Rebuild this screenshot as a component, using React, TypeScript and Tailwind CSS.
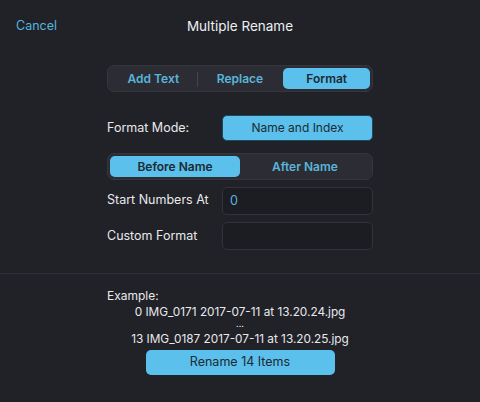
const font = { fontFamily: 'Inter, "Noto Sans", sans-serif' };

function Segment({ items, active }: { items: string[]; active: number }) {
  return (
    <div className="flex h-[27px] items-stretch rounded-[7px] border border-[#34353d] bg-[#2c2d34] p-[2px]">
      {items.map((label, i) => {
        const on = i === active;
        const showDivider = i > 0 && !on && i - 1 !== active;
        return (
          <div key={label} className="relative flex flex-1 items-center justify-center">
            {showDivider && <div className="absolute left-0 top-[4px] h-[15px] w-px bg-[#44454d]" />}
            <div
              className={
                on
                  ? 'flex h-full w-full items-center justify-center rounded-[5px] bg-[#5bc0eb] text-[12px] font-semibold text-[#1c2a33]'
                  : 'flex h-full w-full items-center justify-center text-[12px] font-semibold text-[#5ab5da]'
              }
            >
              {label}
            </div>
          </div>
        );
      })}
    </div>
  );
}

export default function App() {
  return (
    <div className="h-[402px] w-[480px] overflow-hidden bg-[#212228] text-[#e8e9ec]" style={font}>
      <div className="grid h-[50px] grid-cols-[1fr_auto_1fr] items-center px-4 pt-[3px]">
        <div className="text-[12.5px] text-[#54b4dc]">Cancel</div>
        <div className="text-[13.5px] text-[#eeeff1]">Multiple Rename</div>
        <div />
      </div>

      <div className="mx-auto w-[266px]">
        <div className="mt-[15px]">
          <Segment items={['Add Text', 'Replace', 'Format']} active={2} />
        </div>

        <div className="mt-[23px] flex items-center justify-between">
          <div className="text-[12.5px]">Format Mode:</div>
          <div className="flex h-[26px] w-[151px] items-center justify-center rounded-[5px] border border-[#1b4a5e] bg-[#5bc0eb] text-[12px] text-[#1c2a33]">
            Name and Index
          </div>
        </div>

        <div className="mt-[12px]">
          <Segment items={['Before Name', 'After Name']} active={0} />
        </div>

        <div className="mt-[7px] flex items-center justify-between">
          <div className="pb-[2px] text-[12.5px]">Start Numbers At</div>
          <div className="flex h-[28px] w-[151px] items-center rounded-[5px] border border-[#31323a] bg-[#1c1d23] px-[7px] text-[12.5px] text-[#5ab5da]">
            0
          </div>
        </div>

        <div className="mt-[7px] flex items-center justify-between">
          <div className="text-[12.5px]">Custom Format</div>
          <div className="h-[28px] w-[151px] rounded-[5px] border border-[#31323a] bg-[#1c1d23]" />
        </div>
      </div>

      <div className="mt-[23px] h-px bg-[#2f3037]" />

      <div className="mx-auto w-[266px] pt-[14px]">
        <div className="text-[12px] leading-[15px]">Example:</div>
        <div className="mt-[2px] text-center text-[11.8px] leading-[14px]">
          <div>0 IMG_0171 2017-07-11 at 13.20.24.jpg</div>
          <div className="h-[13px] text-[9px] leading-[9px]">...</div>
          <div>13 IMG_0187 2017-07-11 at 13.20.25.jpg</div>
        </div>
        <div className="mt-[4px] flex justify-center">
          <div className="flex h-[25px] w-[189px] items-center justify-center rounded-[5px] bg-[#5bc0eb] text-[12.5px] text-[#1c2a33]">
            Rename 14 Items
          </div>
        </div>
      </div>
    </div>
  );
}
